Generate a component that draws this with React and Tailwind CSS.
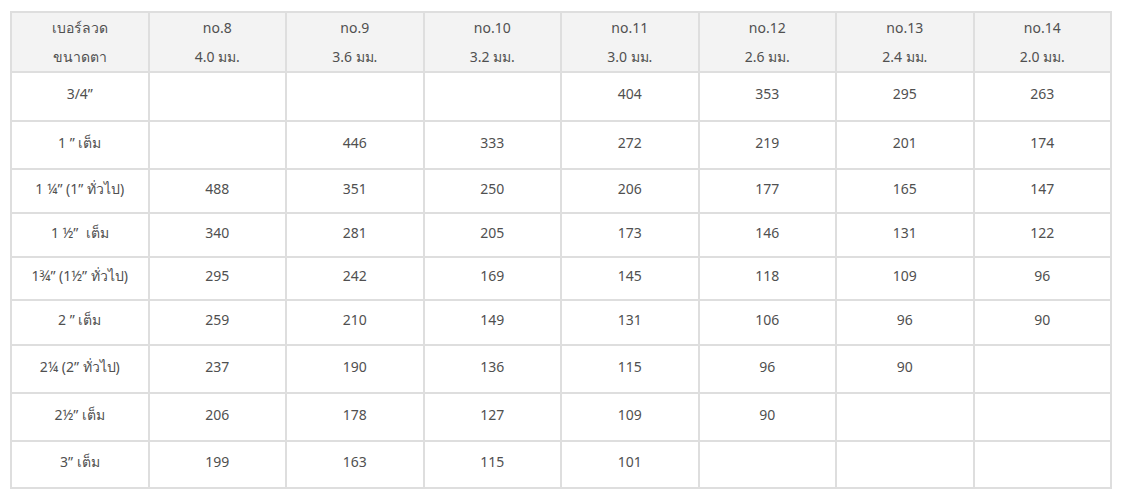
const cols = [
  ['no.8', '4.0 มม.'],
  ['no.9', '3.6 มม.'],
  ['no.10', '3.2 มม.'],
  ['no.11', '3.0 มม.'],
  ['no.12', '2.6 มม.'],
  ['no.13', '2.4 มม.'],
  ['no.14', '2.0 มม.'],
];

const rows = [
  { label: '3/4”', h: 'h-[49px]', v: ['', '', '', '404', '353', '295', '263'] },
  { label: '1 ” เต็ม', h: 'h-[48px]', v: ['', '446', '333', '272', '219', '201', '174'] },
  { label: '1 ¼” (1” ทั่วไป)', h: 'h-[44px]', v: ['488', '351', '250', '206', '177', '165', '147'] },
  { label: '1 ½”  เต็ม', h: 'h-[44px]', v: ['340', '281', '205', '173', '146', '131', '122'] },
  { label: '1¾” (1½” ทั่วไป)', h: 'h-[43px]', v: ['295', '242', '169', '145', '118', '109', '96'] },
  { label: '2 ” เต็ม', h: 'h-[45px]', v: ['259', '210', '149', '131', '106', '96', '90'] },
  { label: '2¼ (2” ทั่วไป)', h: 'h-[48px]', v: ['237', '190', '136', '115', '96', '90', ''] },
  { label: '2½” เต็ม', h: 'h-[48px]', v: ['206', '178', '127', '109', '90', '', ''] },
  { label: '3” เต็ม', h: 'h-[47px]', v: ['199', '163', '115', '101', '', '', ''] },
];

export default function App() {
  return (
    <div className="w-[1122px] h-[498px] bg-white pt-[11px] pl-[10px]" style={{ fontFamily: '"Noto Sans", "Liberation Sans", sans-serif' }}>
      <table className="w-[1102px] table-fixed border-collapse text-[14px] text-[#505050]">
        <thead>
          <tr className="h-[60px] bg-[#f3f3f3]">
            <th className="border-2 border-[#dedede] font-normal text-center leading-[29px]">
              <div>เบอร์ลวด</div>
              <div>ขนาดตา</div>
            </th>
            {cols.map(([n, mm]) => (
              <th key={n} className="border-2 border-[#dedede] font-normal text-center leading-[29px]">
                <div>{n}</div>
                <div>{mm}</div>
              </th>
            ))}
          </tr>
        </thead>
        <tbody>
          {rows.map((r) => (
            <tr key={r.label} className={r.h}>
              <td className="border-2 border-[#dedede] text-center align-middle whitespace-pre pb-[6px]">{r.label}</td>
              {r.v.map((x, i) => (
                <td key={i} className="border-2 border-[#dedede] text-center align-middle pb-[6px]">{x}</td>
              ))}
            </tr>
          ))}
        </tbody>
      </table>
    </div>
  );
}
